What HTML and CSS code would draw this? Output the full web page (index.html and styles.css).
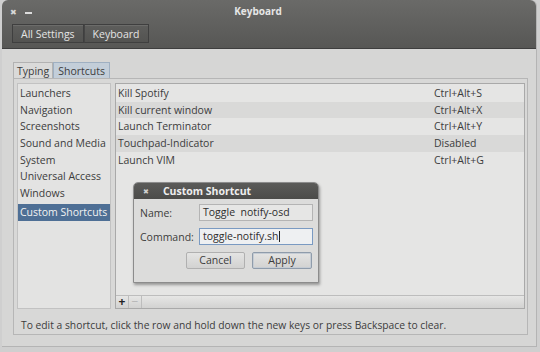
FILE: index.html
```html
<!DOCTYPE html>
<html lang="en">
<head>
    <meta charset="UTF-8">
    <title>Keyboard</title>
    <link rel="stylesheet" href="styles.css">
</head>
<body>
<div class="fenetre">
    <div class="entete">
        <div class="barre-titre">
            <span class="bouton-fermer">&#x2716;</span>
            <span class="bouton-reduire"></span>
            <span class="titre">Keyboard</span>
        </div>
        <div class="barre-outils">
            <span class="bouton-outil">All Settings</span><span class="bouton-outil">Keyboard</span>
        </div>
    </div>
    <div class="corps">
        <div class="onglets">
            <span class="onglet">Typing</span><span class="onglet actif">Shortcuts</span>
        </div>
        <div class="cadre">
            <div class="rangee-listes">
                <ul class="liste-categories">
                    <li>Launchers</li>
                    <li>Navigation</li>
                    <li>Screenshots</li>
                    <li>Sound and Media</li>
                    <li>System</li>
                    <li>Universal Access</li>
                    <li>Windows</li>
                    <li class="selection">Custom Shortcuts</li>
                </ul>
                <div class="panneau-raccourcis">
                    <div class="liste-raccourcis">
                        <div class="ligne"><span>Kill Spotify</span><span class="touche">Ctrl+Alt+S</span></div>
                        <div class="ligne"><span>Kill current window</span><span class="touche">Ctrl+Alt+X</span></div>
                        <div class="ligne"><span>Launch Terminator</span><span class="touche">Ctrl+Alt+Y</span></div>
                        <div class="ligne"><span>Touchpad-Indicator</span><span class="touche">Disabled</span></div>
                        <div class="ligne"><span>Launch VIM</span><span class="touche">Ctrl+Alt+G</span></div>
                    </div>
                    <div class="barre-ajout">
                        <span class="petit-bouton">+</span><span class="petit-bouton inactif">&minus;</span>
                    </div>
                </div>
            </div>
            <p class="aide">To edit a shortcut, click the row and hold down the new keys or press Backspace to clear.</p>
        </div>
    </div>

    <!-- Dialogue par-dessus la liste -->
    <div class="dialogue">
        <div class="dialogue-titre"><span class="croix">&#x2716;</span>Custom Shortcut</div>
        <div class="dialogue-corps">
            <div class="champ"><label>Name:</label><span class="saisie">Toggle  notify-osd</span></div>
            <div class="champ"><label>Command:</label><span class="saisie focus">toggle-notify.sh<span class="curseur"></span></span></div>
            <div class="boutons">
                <span class="bouton">Cancel</span><span class="bouton defaut">Apply</span>
            </div>
        </div>
    </div>
</div>
</body>
</html>
```

FILE: styles.css
```css
body {
    margin: 0;
    background: #cfcfcf;
    font-family: "Open Sans", "DejaVu Sans", sans-serif;
    font-size: 10.5px;
    color: #3c3c3c;
    width: 540px;
    height: 352px;
    overflow: hidden;
}

.fenetre {
    position: relative;
    margin-left: 2px;
    width: 535px;
    height: 347px;
    background: #d6d6d5;
    border-radius: 6px 6px 0 0;
    border-right: 1px solid #b4b4b4;
    border-bottom: 1px solid #b4b4b4;
    box-sizing: border-box;
}

.entete {
    height: 49px;
    background: linear-gradient(#6a6a68, #575755);
    border-radius: 6px 6px 0 0;
    border-bottom: 1px solid #3e3e3e;
    box-sizing: border-box;
}

.barre-titre {
    position: relative;
    height: 22px;
    display: flex;
    align-items: center;
}
.bouton-fermer {
    color: #d8d8d8;
    font-size: 8px;
    margin-left: 8px;
}
.bouton-reduire {
    width: 7px;
    height: 2px;
    background: #dcdcdc;
    margin-left: 8px;
    margin-top: 4px;
}
.titre {
    position: absolute;
    left: 0;
    right: 0;
    text-align: center;
    color: #e6e6e6;
    font-weight: bold;
    font-size: 10px;
    margin-right: 22px;
}

.barre-outils {
    display: flex;
    margin-left: 10px;
    margin-top: 2px;
}
.bouton-outil {
    height: 19px;
    line-height: 18px;
    padding: 0 8px;
    color: #e4e4e4;
    background: linear-gradient(#5e5e5c, #535351);
    border: 1px solid #3f3f3f;
    box-shadow: inset 0 1px 0 #6c6c6a;
    box-sizing: border-box;
}
.bouton-outil + .bouton-outil {
    border-left: 1px solid #454545;
}

.corps {
    padding: 13px 8px 0 11px;
}

.onglets {
    display: flex;
}
.onglet {
    height: 16px;
    line-height: 16px;
    padding: 0 3px;
    border: 1px solid #b2b2b2;
    border-bottom: none;
    background: #dadad9;
    box-sizing: border-box;
}
.onglet.actif {
    background: #c3ced9;
    border-color: #9fb0c2;
    padding: 0 4px;
}

.cadre {
    border: 1px solid #b6b6b6;
    height: 257px;
    box-sizing: border-box;
    padding: 4px 2px 0 3px;
    background: #d8d8d7;
}

.rangee-listes {
    display: flex;
    gap: 4px;
    height: 226px;
}

.liste-categories {
    list-style: none;
    margin: 0;
    padding: 1px 0 0 0;
    width: 94px;
    background: #e3e3e2;
    border: 1px solid #c2c2c2;
    box-sizing: border-box;
}
.liste-categories li {
    height: 16.7px;
    line-height: 16.7px;
    padding-left: 2px;
}
.liste-categories li.selection {
    margin-top: 2px;
    background: #4e6f95;
    color: #f2f2f2;
}

.panneau-raccourcis {
    flex: 1;
    display: flex;
    flex-direction: column;
    border: 1px solid #a9a9a9;
    box-sizing: border-box;
}
.liste-raccourcis {
    flex: 1;
    background: #e5e5e4;
    padding-top: 1px;
}
.ligne {
    display: flex;
    height: 16.7px;
    line-height: 16.7px;
    padding-left: 2px;
}
.ligne:nth-child(even) {
    background: #d9d9d8;
}
.ligne span:first-child {
    width: 316px;
}

.barre-ajout {
    height: 12px;
    display: flex;
    background: linear-gradient(#e6e6e5, #d2d2d1);
    border-top: 1px solid #bdbdbd;
}
.petit-bouton {
    width: 12px;
    height: 12px;
    line-height: 11px;
    text-align: center;
    font-size: 12px;
    font-weight: bold;
    color: #222;
    border-right: 1px solid #bdbdbd;
}
.petit-bouton.inactif {
    color: #b4b4b4;
    font-weight: normal;
}

.aide {
    margin: 0;
    padding: 9px 0 0 4px;
    font-size: 10.3px;
}

.dialogue {
    position: absolute;
    left: 131px;
    top: 182px;
    width: 186px;
    height: 101px;
    background: #dcdcdb;
    border: 1px solid #8c8c8c;
    border-radius: 5px 5px 0 0;
    box-shadow: 1px 2px 3px rgba(0, 0, 0, 0.35);
    box-sizing: border-box;
}
.dialogue-titre {
    height: 16px;
    line-height: 16px;
    background: linear-gradient(#5b5b59, #4b4b49);
    color: #eeeeee;
    font-weight: bold;
    border-radius: 4px 4px 0 0;
    padding-left: 9px;
}
.croix {
    font-size: 7px;
    color: #d0d0d0;
    margin-right: 14px;
    vertical-align: 1px;
}
.dialogue-corps {
    padding: 5px 4px 0 6px;
}
.champ {
    display: flex;
    align-items: center;
    margin-bottom: 7px;
}
.champ label {
    width: 59px;
}
.saisie {
    width: 114px;
    height: 17px;
    line-height: 15px;
    padding-left: 3px;
    background: #e6e6e5;
    border: 1px solid #b4b4b4;
    box-sizing: border-box;
    color: #2e2e2e;
    white-space: pre;
}
.saisie.focus {
    border-color: #7a9ac2;
    background: #eef0f2;
}
.curseur {
    display: inline-block;
    width: 1px;
    height: 11px;
    background: #222;
    vertical-align: -2px;
}
.boutons {
    display: flex;
    justify-content: flex-end;
    gap: 7px;
    margin-top: 2px;
    padding-right: 2px;
}
.bouton {
    width: 59px;
    height: 17px;
    line-height: 15px;
    text-align: center;
    border: 1px solid #b0b0b0;
    border-radius: 2px;
    background: linear-gradient(#e4e4e3, #d2d2d1);
    box-sizing: border-box;
}
.bouton.defaut {
    width: 60px;
    border-color: #8f9cab;
    box-shadow: inset 0 0 0 1px #c5ccd4;
}
```
